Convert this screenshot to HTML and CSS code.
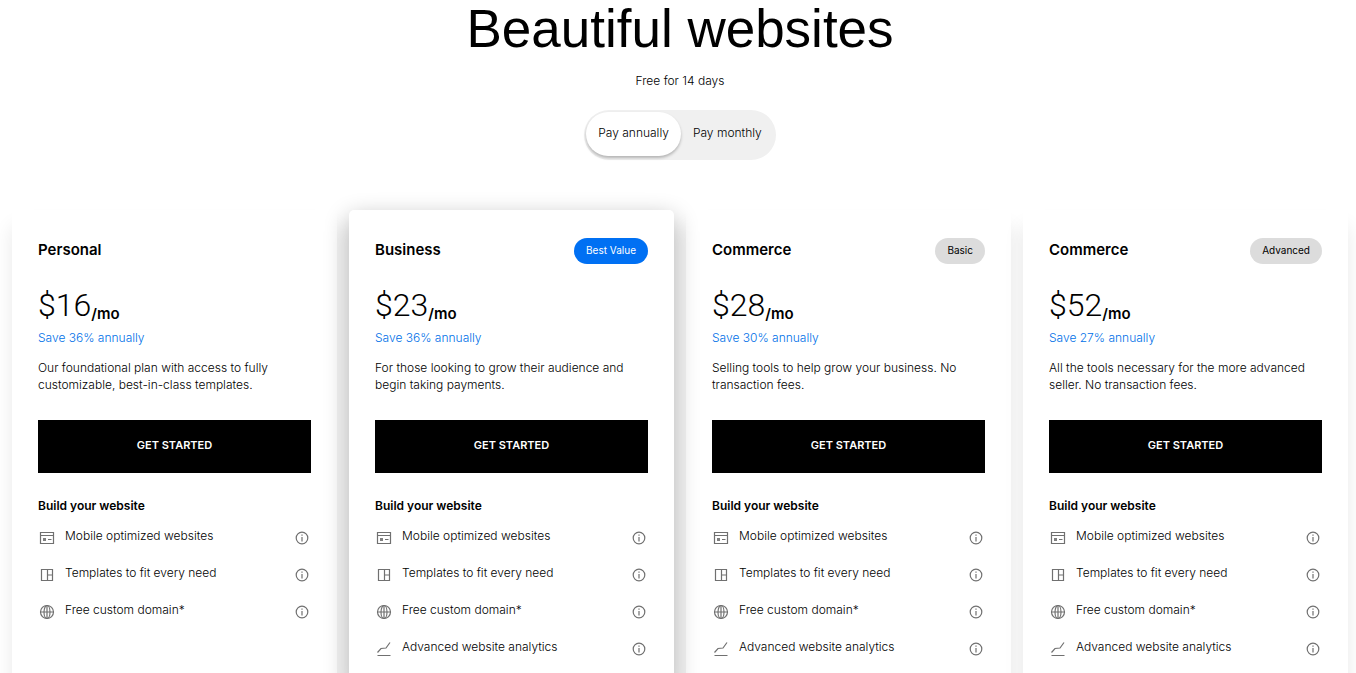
FILE: index.html
```html
<!DOCTYPE html>
<html lang="en">
<head>
    <meta charset="UTF-8">
    <meta name="viewport" content="width=device-width, initial-scale=1.0">
    <title>Pricing</title>
    <link rel="stylesheet" href="styles.css">
</head>
<body>
    <!-- Shared icons -->
    <svg class="sprite" aria-hidden="true">
        <symbol id="icon-mobile" viewBox="0 0 16 16">
            <path d="M1.500 2.500h13v11h-13zM1.500 5.500h13M9 9.500h3.500" />
            <path d="M4 8h3v3H4z" fill="#808080" stroke="none" />
        </symbol>
        <symbol id="icon-template" viewBox="0 0 16 16">
            <path d="M2.500 2.500h12v11h-12zM8.500 2.500v11M8.500 7.500h6M11.500 2.500v5" stroke="none" />
            <path d="M2.500 2.500h11v11h-11zM8.500 2.500v11M8.500 8h5" />
        </symbol>
        <symbol id="icon-globe" viewBox="0 0 16 16">
            <circle cx="8" cy="8" r="6.500" />
            <ellipse cx="8" cy="8" rx="3" ry="6.500" />
            <path d="M1.500 8h13M8 1.500v13" />
        </symbol>
        <symbol id="icon-chart" viewBox="0 0 16 16">
            <path d="M1.500 11.500L5 7.500l5-.5 4-5.500M1.500 14.500h13" />
        </symbol>
        <symbol id="icon-info" viewBox="0 0 16 16">
            <circle cx="8" cy="8" r="5.800" />
            <path d="M8 7v4.500M8 4.500v1.300" />
        </symbol>
    </svg>

    <header class="header">
        <h1 class="title">Beautiful websites</h1>
        <p class="trial">Free for 14 days</p>
        <div class="toggle">
            <button type="button" class="toggle-btn active">Pay annually</button>
            <button type="button" class="toggle-btn">Pay monthly</button>
        </div>
    </header>

    <main class="plans">
        <section class="card">
            <div class="card-head">
                <h2 class="plan-name">Personal</h2>
            </div>
            <p class="price"><span class="amount">$16</span><span class="period">/mo</span></p>
            <p class="save">Save 36% annually</p>
            <p class="description">Our foundational plan with access to fully customizable, best-in-class templates.</p>
            <button type="button" class="btn">GET STARTED</button>
            <h3 class="features-title">Build your website</h3>
            <ul class="features">
                <li><svg class="icon"><use href="#icon-mobile" /></svg><span>Mobile optimized websites</span><button type="button" class="info" aria-label="More info"><svg class="icon"><use href="#icon-info" /></svg></button></li>
                <li><svg class="icon"><use href="#icon-template" /></svg><span>Templates to fit every need</span><button type="button" class="info" aria-label="More info"><svg class="icon"><use href="#icon-info" /></svg></button></li>
                <li><svg class="icon"><use href="#icon-globe" /></svg><span>Free custom domain*</span><button type="button" class="info" aria-label="More info"><svg class="icon"><use href="#icon-info" /></svg></button></li>
            </ul>
        </section>

        <section class="card featured">
            <div class="card-head">
                <h2 class="plan-name">Business</h2>
                <span class="badge badge-blue">Best Value</span>
            </div>
            <p class="price"><span class="amount">$23</span><span class="period">/mo</span></p>
            <p class="save">Save 36% annually</p>
            <p class="description">For those looking to grow their audience and begin taking payments.</p>
            <button type="button" class="btn">GET STARTED</button>
            <h3 class="features-title">Build your website</h3>
            <ul class="features">
                <li><svg class="icon"><use href="#icon-mobile" /></svg><span>Mobile optimized websites</span><button type="button" class="info" aria-label="More info"><svg class="icon"><use href="#icon-info" /></svg></button></li>
                <li><svg class="icon"><use href="#icon-template" /></svg><span>Templates to fit every need</span><button type="button" class="info" aria-label="More info"><svg class="icon"><use href="#icon-info" /></svg></button></li>
                <li><svg class="icon"><use href="#icon-globe" /></svg><span>Free custom domain*</span><button type="button" class="info" aria-label="More info"><svg class="icon"><use href="#icon-info" /></svg></button></li>
                <li><svg class="icon"><use href="#icon-chart" /></svg><span>Advanced website analytics</span><button type="button" class="info" aria-label="More info"><svg class="icon"><use href="#icon-info" /></svg></button></li>
            </ul>
        </section>

        <section class="card">
            <div class="card-head">
                <h2 class="plan-name">Commerce</h2>
                <span class="badge">Basic</span>
            </div>
            <p class="price"><span class="amount">$28</span><span class="period">/mo</span></p>
            <p class="save">Save 30% annually</p>
            <p class="description">Selling tools to help grow your business. No transaction fees.</p>
            <button type="button" class="btn">GET STARTED</button>
            <h3 class="features-title">Build your website</h3>
            <ul class="features">
                <li><svg class="icon"><use href="#icon-mobile" /></svg><span>Mobile optimized websites</span><button type="button" class="info" aria-label="More info"><svg class="icon"><use href="#icon-info" /></svg></button></li>
                <li><svg class="icon"><use href="#icon-template" /></svg><span>Templates to fit every need</span><button type="button" class="info" aria-label="More info"><svg class="icon"><use href="#icon-info" /></svg></button></li>
                <li><svg class="icon"><use href="#icon-globe" /></svg><span>Free custom domain*</span><button type="button" class="info" aria-label="More info"><svg class="icon"><use href="#icon-info" /></svg></button></li>
                <li><svg class="icon"><use href="#icon-chart" /></svg><span>Advanced website analytics</span><button type="button" class="info" aria-label="More info"><svg class="icon"><use href="#icon-info" /></svg></button></li>
            </ul>
        </section>

        <section class="card">
            <div class="card-head">
                <h2 class="plan-name">Commerce</h2>
                <span class="badge">Advanced</span>
            </div>
            <p class="price"><span class="amount">$52</span><span class="period">/mo</span></p>
            <p class="save">Save 27% annually</p>
            <p class="description">All the tools necessary for the more advanced seller. No transaction fees.</p>
            <button type="button" class="btn">GET STARTED</button>
            <h3 class="features-title">Build your website</h3>
            <ul class="features">
                <li><svg class="icon"><use href="#icon-mobile" /></svg><span>Mobile optimized websites</span><button type="button" class="info" aria-label="More info"><svg class="icon"><use href="#icon-info" /></svg></button></li>
                <li><svg class="icon"><use href="#icon-template" /></svg><span>Templates to fit every need</span><button type="button" class="info" aria-label="More info"><svg class="icon"><use href="#icon-info" /></svg></button></li>
                <li><svg class="icon"><use href="#icon-globe" /></svg><span>Free custom domain*</span><button type="button" class="info" aria-label="More info"><svg class="icon"><use href="#icon-info" /></svg></button></li>
                <li><svg class="icon"><use href="#icon-chart" /></svg><span>Advanced website analytics</span><button type="button" class="info" aria-label="More info"><svg class="icon"><use href="#icon-info" /></svg></button></li>
            </ul>
        </section>
    </main>
</body>
</html>
```
FILE: styles.css
```css
/* General styles */
* {
    margin: 0;
    padding: 0;
    box-sizing: border-box;
}

body {
    font-family: Inter, "Liberation Sans", sans-serif;
    font-size: 12px;
    font-weight: 300;
    line-height: 17px;
    background: #fff;
    color: #000;
}

button {
    font: inherit;
    color: inherit;
    border: none;
    background: none;
    cursor: pointer;
}

.sprite {
    display: none;
}

/* Header */
.header {
    display: flex;
    flex-direction: column;
    align-items: center;
    padding-left: 4px;
}

.title {
    font-family: "Liberation Sans", Arial, sans-serif;
    font-size: 53px;
    font-weight: 400;
    line-height: 58px;
}

.trial {
    margin: 14px 0 21px;
}

.toggle {
    display: flex;
    padding: 2px 2px 4px;
    border-radius: 25px;
    background: #f0f0f0;
}

.toggle-btn {
    height: 44px;
    padding: 0 12px 3px;
    border-radius: 22px;
}

.toggle-btn.active {
    background: #fff;
    box-shadow: 0 2px 3px rgba(0, 0, 0, 0.25);
}

/* Plans */
.plans {
    display: grid;
    grid-template-columns: repeat(4, 1fr);
    gap: 12px;
    padding: 50px 8px 0 12px;
}

.card {
    padding: 28px 26px;
    border-radius: 5px;
    background: #fff;
    box-shadow: 0 16px 20px rgba(0, 0, 0, 0.09);
}

.card.featured {
    position: relative;
    box-shadow: 0 8px 24px rgba(0, 0, 0, 0.32);
}

.card-head {
    display: flex;
    justify-content: space-between;
    align-items: flex-start;
    height: 26px;
}

.plan-name {
    font-size: 15px;
    font-weight: 600;
    line-height: 24px;
}

.badge {
    padding: 0 12px 2px;
    border-radius: 13px;
    background: #dcdcdc;
    font-size: 10px;
    font-weight: 400;
    line-height: 24px;
}

.badge-blue {
    background: #0070f3;
    color: #fff;
}

.price {
    display: flex;
    align-items: flex-end;
    height: 36px;
    margin-top: 24px;
}

.amount {
    font-family: Roboto, Inter, sans-serif;
    font-size: 32px;
    line-height: 38px;
}

.period {
    font-size: 15px;
    font-weight: 600;
    line-height: 20px;
}

.save {
    margin-top: 5px;
    color: #0070e8;
}

.description {
    margin: 13px 0 27px;
}

.btn {
    display: block;
    width: 100%;
    height: 53px;
    padding-bottom: 2px;
    background: #000;
    color: #fff;
    font-size: 11px;
    font-weight: 600;
}

.features-title {
    margin: 24px 0 13px;
    font-size: 12px;
    font-weight: 600;
}

.features {
    display: flex;
    flex-direction: column;
    gap: 17px;
    list-style: none;
}

.features li {
    display: flex;
    gap: 10px;
    height: 20px;
}

.icon {
    flex: none;
    display: block;
    width: 16px;
    height: 16px;
    fill: none;
    stroke: #707070;
    stroke-width: 1.2;
}

.features li > .icon {
    margin: 3px 0 0 1px;
}

.info {
    margin: 3px 1px 0 auto;
    align-self: flex-start;
}

@media (max-width: 900px) {
    .plans {
        grid-template-columns: repeat(2, 1fr);
    }
}
```
